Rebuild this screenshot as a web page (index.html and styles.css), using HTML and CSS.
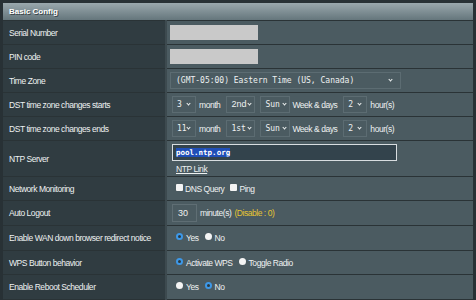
FILE: index.html
```html
<!DOCTYPE html>
<html lang="en">
<head>
  <meta charset="UTF-8" />
  <title>Basic Config</title>
  <link rel="stylesheet" href="styles.css">
</head>
<body>
  <div class="frame">
    <table class="config">
      <thead>
        <tr><th colspan="2">Basic Config</th></tr>
      </thead>
      <tbody>
        <tr>
          <td class="label">Serial Number</td>
          <td class="value"><div class="ctl"><input class="plain" type="text"></div></td>
        </tr>
        <tr>
          <td class="label">PIN code</td>
          <td class="value"><div class="ctl"><input class="plain" type="text"></div></td>
        </tr>
        <tr>
          <td class="label">Time Zone</td>
          <td class="value"><div class="ctl"><span class="sel tz">(GMT-05:00) Eastern Time (US, Canada)<i class="caret"></i></span></div></td>
        </tr>
        <tr>
          <td class="label">DST time zone changes starts</td>
          <td class="value">
            <div class="ctl">
              <span class="sel w24">3<i class="caret"></i></span><span class="txt">month</span>
              <span class="sel sans w29">2nd<i class="caret"></i></span>
              <span class="sel w30">Sun<i class="caret"></i></span><span class="txt short">Week &amp; days</span>
              <span class="sel w24">2<i class="caret"></i></span><span class="txt">hour(s)</span>
            </div>
          </td>
        </tr>
        <tr>
          <td class="label">DST time zone changes ends</td>
          <td class="value">
            <div class="ctl">
              <span class="sel w24">11<i class="caret"></i></span><span class="txt">month</span>
              <span class="sel w29">1st<i class="caret"></i></span>
              <span class="sel w30">Sun<i class="caret"></i></span><span class="txt short">Week &amp; days</span>
              <span class="sel w24">2<i class="caret"></i></span><span class="txt">hour(s)</span>
            </div>
          </td>
        </tr>
        <tr class="tall">
          <td class="label">NTP Server</td>
          <td class="value">
            <div class="ntp"><span class="hl">pool.ntp.org</span></div>
            <a class="ntp-link" href="#">NTP Link</a>
          </td>
        </tr>
        <tr>
          <td class="label">Network Monitoring</td>
          <td class="value">
            <div class="ctl">
              <span class="check"></span><span class="txt">DNS Query</span>
              <span class="check"></span><span class="txt">Ping</span>
            </div>
          </td>
        </tr>
        <tr class="mid">
          <td class="label">Auto Logout</td>
          <td class="value">
            <div class="ctl">
              <span class="num">30</span><span class="txt">minute(s)</span><span class="hint">(Disable : 0)</span>
            </div>
          </td>
        </tr>
        <tr class="mid">
          <td class="label">Enable WAN down browser redirect notice</td>
          <td class="value">
            <div class="ctl">
              <span class="radio on"></span><span class="txt">Yes</span>
              <span class="radio"></span><span class="txt">No</span>
            </div>
          </td>
        </tr>
        <tr>
          <td class="label">WPS Button behavior</td>
          <td class="value">
            <div class="ctl">
              <span class="radio on"></span><span class="txt">Activate WPS</span>
              <span class="radio"></span><span class="txt">Toggle Radio</span>
            </div>
          </td>
        </tr>
        <tr class="mid">
          <td class="label">Enable Reboot Scheduler</td>
          <td class="value">
            <div class="ctl">
              <span class="radio"></span><span class="txt">Yes</span>
              <span class="radio on"></span><span class="txt">No</span>
            </div>
          </td>
        </tr>
      </tbody>
    </table>
  </div>
</body>
</html>
```

FILE: styles.css
```css
body {
  margin: 0;
  background: #283135;
  font-family: "Liberation Sans", Arial, sans-serif;
  font-size: 8.5px;
  letter-spacing: -0.45px;
  color: #eef1f1;
}
.frame {
  padding: 3px 3px 0 3px;
}
.config {
  width: 100%;
  border-collapse: collapse;
}
.config th {
  height: 17px;
  padding: 0 6px;
  text-align: left;
  font-size: 8px;
  letter-spacing: 0;
  font-weight: bold;
  color: #fff;
  text-shadow: 1px 1px 0 #3b4549;
  background: linear-gradient(#9aa8ad, #65767c);
  border-bottom: 1px solid #2a3336;
}
.config td {
  height: 23px;
  padding: 0;
  border-bottom: 1px solid #2a3336;
}
.config tr.mid td {
  height: 24px;
}
.config tr.tall td {
  height: 35px;
}
.label {
  width: 156px;
  padding-left: 6px !important;
  background: #303c41;
  border-right: 2px solid #3d4a4f;
}
.value {
  background: #4b5b61;
  padding-left: 5px !important;
}
.ctl {
  display: flex;
  align-items: center;
  white-space: nowrap;
}
.plain {
  display: block;
  width: 88px;
  height: 15px;
  padding: 0;
  border: 0;
  background: #c9c9c9;
  margin-left: -2px;
}
.sel {
  position: relative;
  box-sizing: border-box;
  height: 17px;
  line-height: 15px;
  padding: 0 0 0 4px;
  border: 1px solid #5c6c72;
  background: #4b5b61;
  color: #eef1f1;
  font-size: 8px;
  letter-spacing: 0;
  font-family: "DejaVu Sans Mono", monospace;
}
.sel.tz {
  width: 231px;
  margin-left: -2px;
  padding-left: 5px;
}
.sel.w24 { width: 24px; }
.sel.w29 { width: 29px; margin-left: 6px; }
.sel.w30 { width: 30px; margin-left: 5px; }
.sel.sans {
  font-family: "Liberation Sans", Arial, sans-serif;
  font-size: 9px;
}
.caret {
  position: absolute;
  right: 5px;
  top: 5px;
  width: 2px;
  height: 2px;
  border-right: 1px solid #eef1f1;
  border-bottom: 1px solid #eef1f1;
  transform: rotate(45deg);
}
.sel.tz .caret {
  right: 8px;
}
.sel.w29 .caret,
.sel.w30 .caret {
  right: 3px;
}
.txt {
  margin-left: 3px;
}
.txt.short {
  margin: 0 6px 0 2px;
}
.ntp {
  width: 220px;
  height: 15px;
  line-height: 15px;
  border: 1px solid #d8dde0;
  background: #33434c;
  padding-left: 3px;
  font-family: "DejaVu Sans Mono", monospace;
  font-size: 7.5px;
  letter-spacing: 0;
  font-weight: bold;
  margin-top: 1px;
}
.hl {
  background: #1f4fb8;
  color: #fff;
}
.ntp-link {
  display: inline-block;
  margin: 3px 0 0 4px;
  color: #eef1f1;
}
.check {
  width: 7px;
  height: 7px;
  border-radius: 1px;
  background: #f4f4f4;
  margin: -3px 0 0 4px;
}
.check + .txt {
  margin-left: 2px;
}
.txt + .check {
  margin-left: 6px;
}
.num {
  box-sizing: border-box;
  width: 25px;
  height: 18px;
  line-height: 16px;
  padding-left: 5px;
  border: 1px solid #5f6e74;
  background: #4b5b61;
  font-size: 9px;
  letter-spacing: 0;
}
.hint {
  color: #e5c533;
  margin-left: 3px;
}
.radio {
  box-sizing: border-box;
  width: 7px;
  height: 7px;
  border-radius: 50%;
  background: #f4f4f4;
  margin: -3px 0 0 4px;
}
.radio.on {
  background: #2c3a40;
  border: 2px solid #3d98e8;
}
.radio + .txt {
  margin-left: 3px;
}
.txt + .radio {
  margin-left: 6px;
}
```
